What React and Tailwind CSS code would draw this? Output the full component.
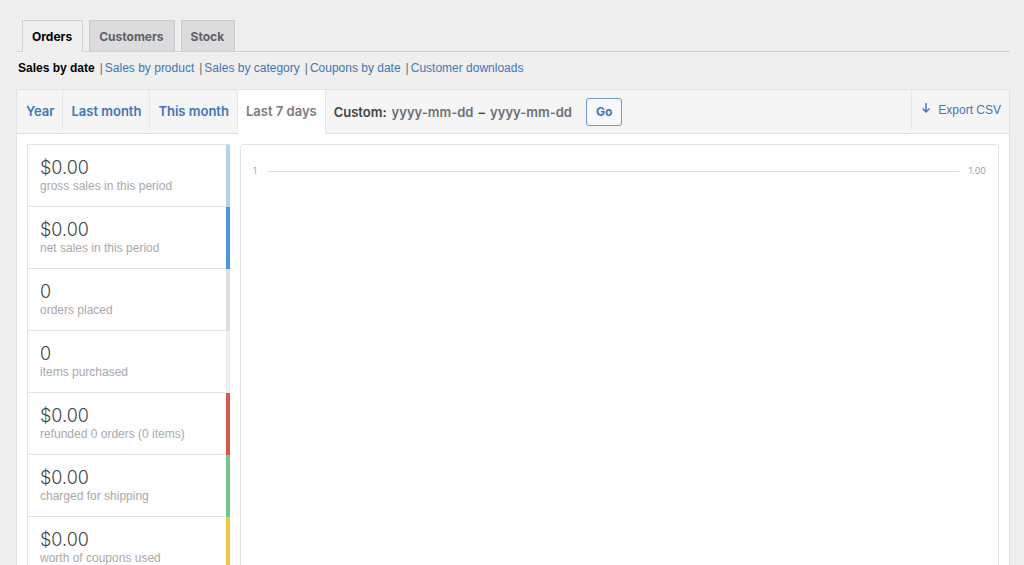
import React from 'react';

const tabs = [
    { label: 'Orders', active: true },
    { label: 'Customers' },
    { label: 'Stock' },
];

const reports = [
    { label: 'Sales by date', active: true },
    { label: 'Sales by product' },
    { label: 'Sales by category' },
    { label: 'Coupons by date' },
    { label: 'Customer downloads' },
];

const ranges = [
    { label: 'Year' },
    { label: 'Last month' },
    { label: 'This month' },
    { label: 'Last 7 days', active: true },
];

const legend = [
    { amount: '$0.00', label: 'gross sales in this period', color: 'border-r-[#b1d4ea]' },
    { amount: '$0.00', label: 'net sales in this period', color: 'border-r-[#4f97da]' },
    { amount: '0', label: 'orders placed', color: 'border-r-[#dbe1e3]' },
    { amount: '0', label: 'items purchased', color: 'border-r-[#ecf0f1]' },
    { amount: '$0.00', label: 'refunded 0 orders (0 items)', color: 'border-r-[#d95746]' },
    { amount: '$0.00', label: 'charged for shipping', color: 'border-r-[#74c68e]' },
    { amount: '$0.00', label: 'worth of coupons used', color: 'border-r-[#ebc845]' },
];

function ReportTabs() {
    return (
        <nav className="flex gap-1.5 border-b border-[#cfcfd1] pl-1.5">
            {tabs.map((tab) => (
                <a
                    key={tab.label}
                    href="#"
                    className={
                        tab.active
                            ? '-mb-px h-8 border border-b-0 border-[#cfcfd1] bg-[#efefef] pr-2.5 pl-[9px] text-xs leading-[31px] font-bold text-black'
                            : 'h-[31px] border border-b-0 border-[#cbcbce] bg-[#dcdcde] pr-2.5 pl-[9px] text-xs leading-[31px] font-bold text-[#5c6066]'
                    }
                >
                    {tab.label}
                </a>
            ))}
        </nav>
    );
}

function ReportLinks() {
    return (
        <ul className="flex pt-2 pl-0.5 font-['Liberation_Sans',sans-serif] text-xs leading-4">
            {reports.map((report, index) => (
                <li key={report.label} className="flex">
                    {index > 0 && <span className="pr-0.5 pl-[5px] text-[#6c6c6c]">|</span>}
                    <a href="#" className={report.active ? 'font-bold text-black' : 'text-[#3f76b8]'}>
                        {report.label}
                    </a>
                </li>
            ))}
        </ul>
    );
}

function RangeBar() {
    return (
        <div className="flex h-11 border-b border-[#dcdcdc] bg-[#f5f5f5] pl-px text-[13px] leading-[42px] font-semibold">
            {ranges.map((range) => (
                <a
                    key={range.label}
                    href="#"
                    className={
                        range.active
                            ? '-mb-px h-11 border-r border-[#e6e6e6] bg-white px-2 text-[#7b7b7b]'
                            : 'h-10 border-r border-[#e6e6e6] px-2 text-[#3f76b8]'
                    }
                >
                    {range.label}
                </a>
            ))}

            {/* Custom range */}
            <form className="flex items-center pl-2 text-[#3f4247]" onSubmit={(e) => e.preventDefault()}>
                <label htmlFor="range-start">Custom:</label>
                <input
                    id="range-start"
                    type="text"
                    placeholder="yyyy-mm-dd"
                    className="ml-[5px] w-[82px] bg-transparent leading-5 outline-none placeholder:text-[#6d7075]"
                />
                <span className="mx-[5px]">–</span>
                <input
                    type="text"
                    aria-label="End date"
                    placeholder="yyyy-mm-dd"
                    className="w-[82px] bg-transparent leading-5 outline-none placeholder:text-[#6d7075]"
                />
                <button
                    type="submit"
                    className="ml-3.5 h-7 w-9 rounded-[3px] border border-[#6f9bcd] bg-[#f7f8f9] text-xs font-bold text-[#3f76b8]"
                >
                    Go
                </button>
            </form>

            <a href="#" className="ml-auto flex h-10 border-l border-[#e6e6e6] px-2 font-normal text-[#3f76b8]">
                <svg
                    className="mt-3 mr-1.5 h-3 w-3"
                    viewBox="0 0 12 12"
                    fill="none"
                    stroke="currentColor"
                    strokeWidth="1.4"
                >
                    <path d="M6 1v9M2.5 6.5L6 10l3.5-3.5" />
                </svg>
                <span className="font-['Liberation_Sans',sans-serif] text-xs leading-10">Export CSV</span>
            </a>
        </div>
    );
}

function Legend() {
    return (
        <ul className="w-[203px] shrink-0 border-t border-l border-[#e3e3e3]">
            {legend.map((item) => (
                <li key={item.label} className={`h-[62px] border-r-4 ${item.color}`}>
                    <div className="h-full border-b border-[#e3e3e3] pt-3 pl-3">
                        <strong className="block text-lg leading-[22px] font-light text-[#464646]">{item.amount}</strong>
                        <span className="block font-['Liberation_Sans',sans-serif] text-xs leading-[14px] text-[#a9a9a9]">
                            {item.label}
                        </span>
                    </div>
                </li>
            ))}
        </ul>
    );
}

export default function App() {
    return (
        <div className="min-h-screen bg-[#efefef] pt-5 pr-3.5 pl-4 font-['Inter','Liberation_Sans',sans-serif]">
            <ReportTabs />
            <ReportLinks />

            <div className="mt-[13px] border border-[#e2e2e2] bg-white">
                <RangeBar />
                <div className="flex gap-2.5 p-2.5">
                    <Legend />
                    <div className="grow rounded-[3px] border border-[#e3e3e3] px-3 pt-5">
                        <div className="flex items-center gap-2.5 text-[9px] leading-3 text-[#a5a5a5]">
                            <span>1</span>
                            <div className="h-px grow bg-[#dedede]" />
                            <span>1.00</span>
                        </div>
                    </div>
                </div>
            </div>
        </div>
    );
}
